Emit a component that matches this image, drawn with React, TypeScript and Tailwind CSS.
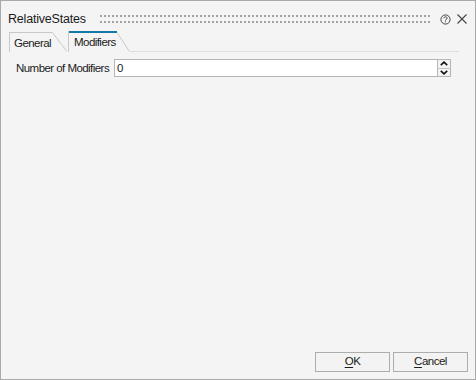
import React from "react";

const ui = "font-['Liberation_Sans',Arial,sans-serif]";

function HelpIcon() {
  return (
    <svg width="11" height="11" viewBox="0 0 11 11" className="shrink-0">
      <circle cx="5.5" cy="5.5" r="4.6" fill="none" stroke="#444" strokeWidth="1" />
      <path
        d="M3.9 4.3 C3.9 3.3 4.6 2.8 5.5 2.8 C6.4 2.8 7.1 3.3 7.1 4.1 C7.1 4.9 6.4 5.1 5.9 5.5 C5.6 5.7 5.5 6 5.5 6.6"
        fill="none"
        stroke="#444"
        strokeWidth="1"
      />
      <rect x="5" y="7.4" width="1" height="1" fill="#444" />
    </svg>
  );
}

function CloseIcon() {
  return (
    <svg width="10" height="10" viewBox="0 0 10 10" className="shrink-0">
      <path d="M0.5 0.5 L9.5 9.5 M9.5 0.5 L0.5 9.5" stroke="#444" strokeWidth="1.1" />
    </svg>
  );
}

function Chevron({ up }: { up?: boolean }) {
  return (
    <svg width="8" height="5" viewBox="0 0 8 5">
      <path
        d={up ? "M0.8 4.2 L4 1.2 L7.2 4.2" : "M0.8 0.8 L4 3.8 L7.2 0.8"}
        fill="none"
        stroke="#111"
        strokeWidth="1.6"
      />
    </svg>
  );
}

// grip handle: rows of 2px dots every 4px
function DotRow() {
  return (
    <div className="h-[2px] w-full bg-[repeating-linear-gradient(90deg,#a3a3a3_0px,#a3a3a3_2px,transparent_2px,transparent_4px)]" />
  );
}

export default function App() {
  return (
    <div
      className={`w-[476px] h-[380px] flex flex-col bg-[#f4f4f4] border border-[#a9a9a9] text-[#1b1b1b] ${ui}`}
    >
      {/* Title bar */}
      <div className="flex items-center h-[22px] mt-[7px] pl-[7px] pr-[8px]">
        <span className="w-[77px] shrink-0 whitespace-nowrap text-[12.5px] leading-none tracking-[-0.2px]">
          RelativeStates
        </span>
        <div className="w-[332px] h-[8px] ml-[15px] mr-[8px] flex flex-col justify-between">
          <DotRow />
          <DotRow />
        </div>
        <HelpIcon />
        <div className="ml-[6px]">
          <CloseIcon />
        </div>
      </div>

      {/* Tabs */}
      <div className="flex items-end h-[21px] mt-[1px] pl-[8px] pr-[16px] text-[11.5px] tracking-[-0.55px]">
        <div className="flex h-[20px]">
          <div className="h-full w-[43px] border-l border-t border-[#c8c8c8] pl-[4px] flex items-center pt-[3px]">
            General
          </div>
          <svg width="15" height="20" viewBox="0 0 15 20" className="shrink-0">
            <path d="M0 0.5 L0.5 0.5 L15 19.5" fill="none" stroke="#c8c8c8" strokeWidth="1" />
          </svg>
        </div>
        <div className="flex h-[21px] ml-[1px]">
          <div className="h-full w-[49px] border-l border-[#c8c8c8] flex flex-col">
            <div className="h-[2px] bg-[#1478a8]" />
            <div className="flex-1 flex items-center pl-[5px] pt-[1px]">Modifiers</div>
          </div>
          <svg width="13" height="21" viewBox="0 0 13 21" className="shrink-0">
            <path d="M0 1.5 L12.5 20.5" fill="none" stroke="#c8c8c8" strokeWidth="1" />
          </svg>
        </div>
        <div className="flex-1 h-px bg-[#dedede]" />
      </div>

      {/* Content */}
      <div className="flex items-center mt-[7px] pl-[15px] text-[11.5px] tracking-[-0.55px]">
        <div className="w-[98px] pt-[1px]">Number of Modifiers</div>
        <div className="w-[324px] h-[18px] border border-[#b5b5b5] bg-white pl-[2px] flex items-center pt-[1px]">
          0
        </div>
        <div className="w-[14px] h-[18px] -ml-px border border-[#b5b5b5] flex flex-col bg-[#f4f4f4]">
          <div className="flex-1 flex items-center justify-center border-b border-[#c4c4c4]">
            <Chevron up />
          </div>
          <div className="flex-1 flex items-center justify-center">
            <Chevron />
          </div>
        </div>
      </div>

      <div className="flex-1" />

      {/* Footer */}
      <div className="flex justify-end gap-[3px] pr-[7px] pb-[7px] text-[11.5px] tracking-[-0.5px]">
        <button className="w-[75px] h-[20px] border border-[#adadad] bg-[#f3f3f3] flex items-center justify-center">
          <span>
            <span className="underline underline-offset-2">O</span>K
          </span>
        </button>
        <button className="w-[75px] h-[20px] border border-[#adadad] bg-[#f3f3f3] flex items-center justify-center">
          <span>
            <span className="underline underline-offset-2">C</span>ancel
          </span>
        </button>
      </div>
    </div>
  );
}
